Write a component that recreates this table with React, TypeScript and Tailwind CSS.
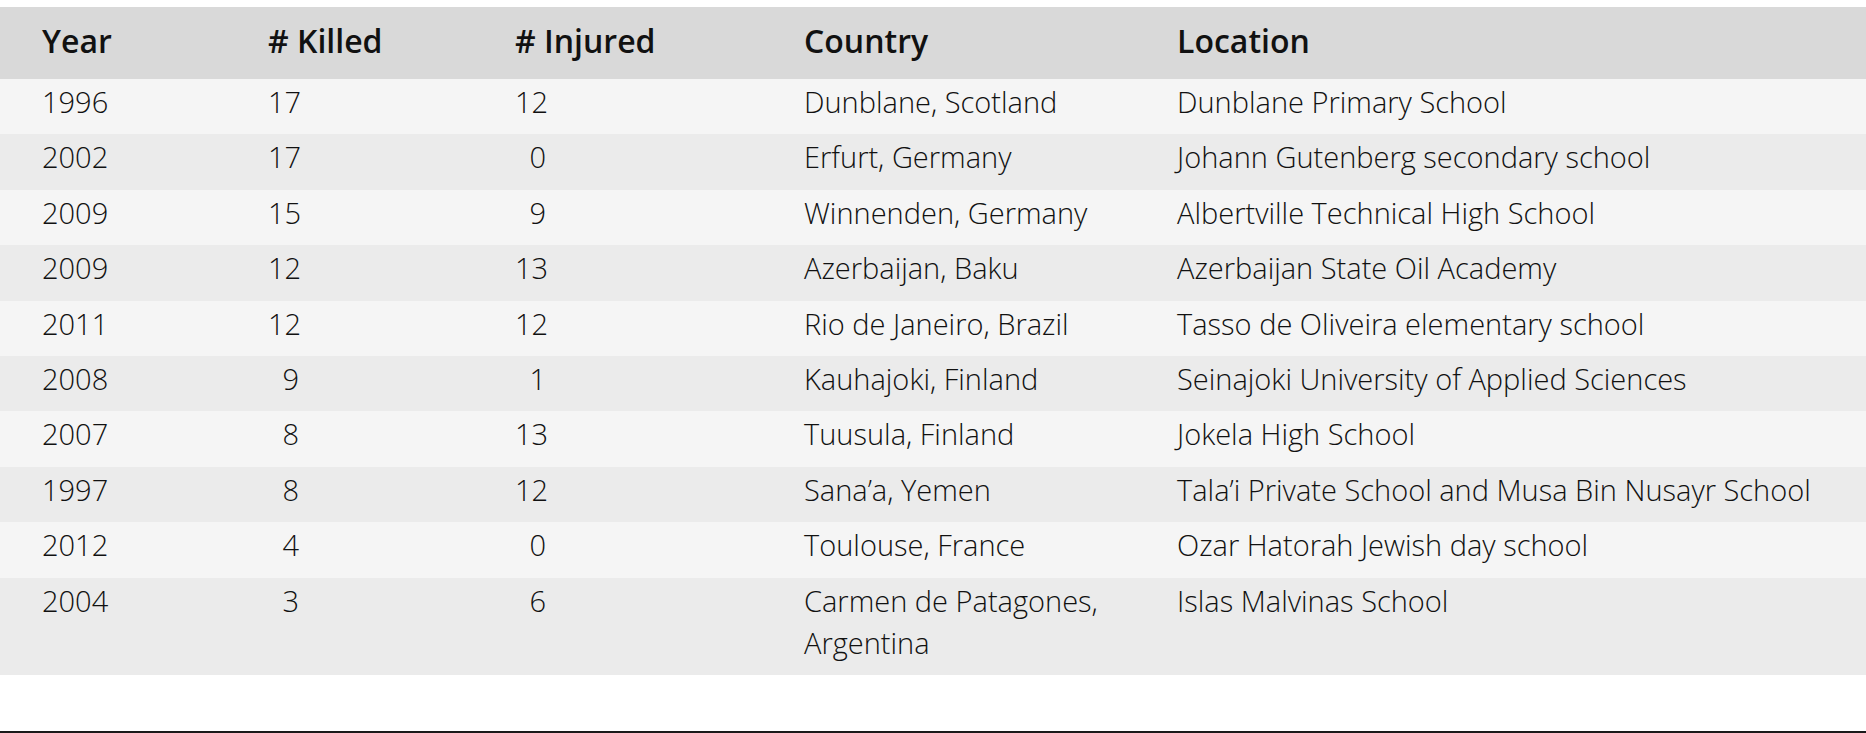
import React from "react";

const rows = [
  { year: "1996", killed: "17", injured: "12", country: "Dunblane, Scotland", location: "Dunblane Primary School" },
  { year: "2002", killed: "17", injured: "0", country: "Erfurt, Germany", location: "Johann Gutenberg secondary school" },
  { year: "2009", killed: "15", injured: "9", country: "Winnenden, Germany", location: "Albertville Technical High School" },
  { year: "2009", killed: "12", injured: "13", country: "Azerbaijan, Baku", location: "Azerbaijan State Oil Academy" },
  { year: "2011", killed: "12", injured: "12", country: "Rio de Janeiro, Brazil", location: "Tasso de Oliveira elementary school" },
  { year: "2008", killed: "9", injured: "1", country: "Kauhajoki, Finland", location: "Seinajoki University of Applied Sciences" },
  { year: "2007", killed: "8", injured: "13", country: "Tuusula, Finland", location: "Jokela High School" },
  { year: "1997", killed: "8", injured: "12", country: "Sana’a, Yemen", location: "Tala’i Private School and Musa Bin Nusayr School" },
  { year: "2012", killed: "4", injured: "0", country: "Toulouse, France", location: "Ozar Hatorah Jewish day school" },
  { year: "2004", killed: "3", injured: "6", country: "Carmen de Patagones, Argentina", location: "Islas Malvinas School" },
];

export default function App() {
  return (
    <div className="w-[1866px] h-[733px] bg-white text-[#111] font-['Open_Sans',sans-serif]">
      <div className="pt-[7px]">
        <table className="w-full table-fixed border-collapse">
          <colgroup>
            <col className="w-[226px]" />
            <col className="w-[247px]" />
            <col className="w-[289px]" />
            <col className="w-[373px]" />
            <col />
          </colgroup>
          <thead>
            <tr className="bg-[#d9d9d9] h-[72px] text-left text-[32px]">
              <th className="pl-[42px] pb-[4px] font-semibold">Year</th>
              <th className="pl-[42px] pb-[4px] font-semibold"># Killed</th>
              <th className="pl-[42px] pb-[4px] font-semibold"># Injured</th>
              <th className="pl-[42px] pb-[4px] font-semibold">Country</th>
              <th className="pl-[42px] pb-[4px] font-semibold">Location</th>
            </tr>
          </thead>
          <tbody className="text-[29px] font-light leading-[42px]">
            {rows.map((r, i) => (
              <tr key={i} className={i % 2 === 0 ? "bg-[#f5f5f5]" : "bg-[#ebebeb]"}>
                <td className="pl-[42px] pt-[2px] pb-[11.4px] align-top">{r.year}</td>
                <td className="pl-[42px] pt-[2px] pb-[11.4px] align-top">
                  <span className="inline-block w-[31px] text-right">{r.killed}</span>
                </td>
                <td className="pl-[42px] pt-[2px] pb-[11.4px] align-top">
                  <span className="inline-block w-[31px] text-right">{r.injured}</span>
                </td>
                <td className="pl-[42px] pr-[20px] pt-[2px] pb-[11.4px] align-top">{r.country}</td>
                <td className="pl-[42px] pt-[2px] pb-[11.4px] align-top whitespace-nowrap">{r.location}</td>
              </tr>
            ))}
          </tbody>
        </table>
      </div>
      <div className="mt-[56px] h-[2px] bg-[#1a1a1a]" />
    </div>
  );
}
